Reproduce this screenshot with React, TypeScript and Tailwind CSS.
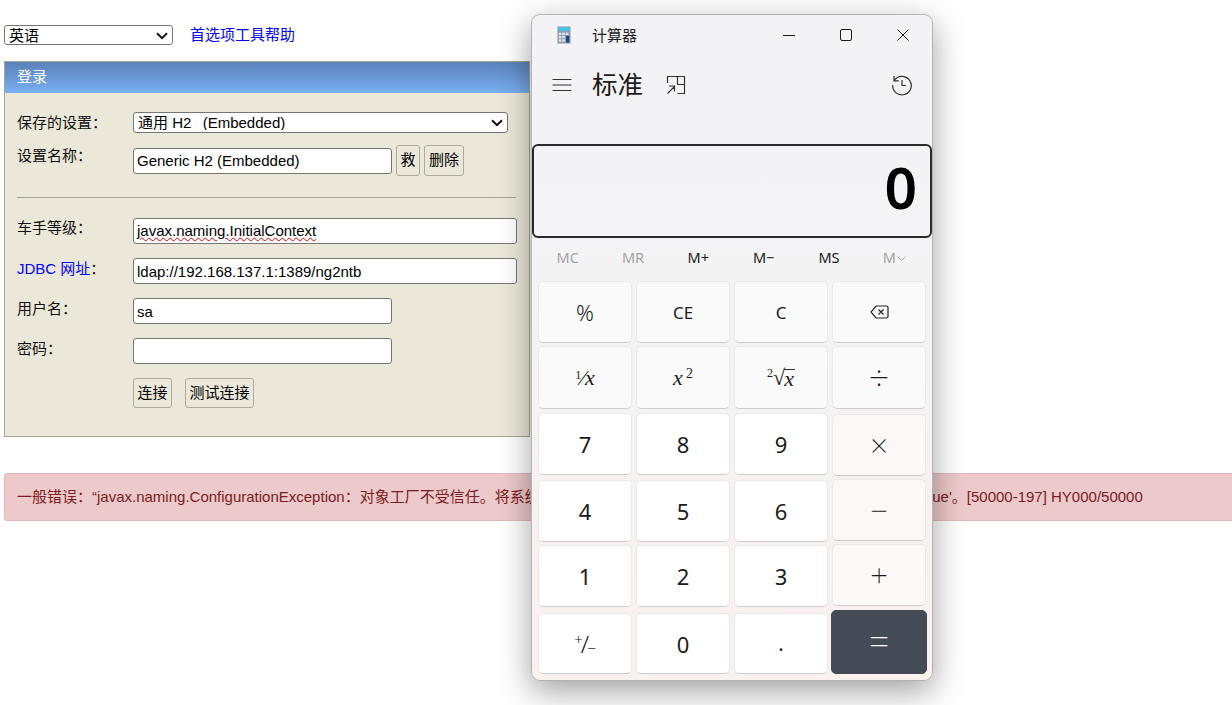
import React from "react";

const FONT = "[font-family:'Liberation_Sans','Noto_Sans_CJK_SC',sans-serif]";
const CALC = "[font-family:'Noto_Sans','Noto_Sans_CJK_SC',sans-serif]";
const MATH = "[font-family:'Liberation_Serif',serif]";

const inputBase =
  "box-border h-[26px] rounded-[3px] border border-[#767676] bg-white pl-[3px] text-[15px] text-black outline-none";
const actionBtn =
  "box-border rounded-[3px] border border-[#aeab9c] bg-[#ebe8d9] text-[15px] text-black";

function Label({ children, className = "" }: { children: React.ReactNode; className?: string }) {
  return <div className={`w-[116px] shrink-0 text-[15px] leading-[20px] text-[#111] ${className}`}>{children}</div>;
}

function Select({ className, value, children }: { className: string; value: string; children: React.ReactNode }) {
  return (
    <div className={`relative ${className}`}>
      <select defaultValue={value} className="box-border block h-full w-full appearance-none rounded-[3px] border border-[#767676] bg-white pl-[4px] text-[15px] leading-none text-black">
        {children}
      </select>
      <svg width="12" height="8" viewBox="0 0 12 8" fill="none" stroke="#111" strokeWidth="2" className="pointer-events-none absolute right-[5px] top-[7px]">
        <path d="M1 1.2l5 5 5-5" />
      </svg>
    </div>
  );
}

function Key({ children, kind = "num", className = "" }: { children: React.ReactNode; kind?: "fn" | "num" | "op" | "eq"; className?: string }) {
  const look =
    kind === "num"
      ? "bg-white border-[#ebe8e7] border-b-[#cfcbca]"
      : kind === "fn"
        ? "bg-[#fafafa] border-[#ebe9e9] border-b-[#d0cdcd]"
        : kind === "op"
          ? "bg-[#fbf8f7] border-[#ece8e7] border-b-[#d3cecd]"
          : "bg-[#444b57] border-[#444b57] text-white";
  return (
    <div className={`flex h-full w-[94px] items-center justify-center rounded-[5px] border text-[#1b1b1b] ${look} ${className}`}>
      {children}
    </div>
  );
}

const numText = "text-[22px] leading-none";
const opText = "text-[31px] leading-none font-extralight";

export default function App() {
  return (
    <div className={`relative h-[705px] w-full overflow-hidden bg-white pl-[4px] pt-[25px] ${FONT}`}>
      <div className="flex h-[20px] items-center">
        <Select className="h-[20px] w-[169px]" value="en">
          <option value="en">英语</option>
        </Select>
        <a className="ml-[17px] mt-[1px] text-[15px] text-[#0000ff]">首选项工具帮助</a>
      </div>

      <div className="mt-[16px] box-border h-[376px] w-[526px] border border-[#a8a594] bg-[#ebe8d9]">
        <div className="flex h-[31px] items-center bg-gradient-to-b from-[#5a82bb] to-[#79aff1] pl-[12px] text-[15px] text-white">登录</div>
        <div className="pl-[12px]">
          <div className="mt-[19px] flex h-[21px] items-center">
            <Label>保存的设置：</Label>
            <Select className="h-[21px] w-[375px]" value="h2">
              <option value="h2">通用 H2 &nbsp;&thinsp;(Embedded)</option>
            </Select>
          </div>
          <div className="mt-[12px] flex h-[31px]">
            <Label className="pt-[1px]">设置名称：</Label>
            <input readOnly value="Generic H2 (Embedded)" className={`${inputBase} mt-[3px] w-[259px] pb-[1px]`} />
            <button className={`${actionBtn} ml-[4px] h-[31px] w-[24px]`}>救</button>
            <button className={`${actionBtn} ml-[4px] h-[31px] w-[40px]`}>删除</button>
          </div>
          <div className="mt-[21px] h-px w-[499px] bg-[#a6a496]" />
          <div className="mt-[20px] flex h-[26px]">
            <Label>车手等级：</Label>
            <div className={`${inputBase} flex w-[384px] items-center`}>
              <span className="underline decoration-[#e00000] decoration-wavy decoration-1 underline-offset-[1px]">javax.naming.InitialContext</span>
            </div>
          </div>
          <div className="mt-[14px] flex h-[26px]">
            <Label className="pt-[1px]"><a className="text-[#0000ff]">JDBC 网址</a>：</Label>
            <input readOnly value="ldap://192.168.137.1:1389/ng2ntb" className={`${inputBase} w-[384px]`} />
          </div>
          <div className="mt-[14px] flex h-[26px]">
            <Label className="pt-[1px]">用户名：</Label>
            <input readOnly value="sa" className={`${inputBase} w-[259px]`} />
          </div>
          <div className="mt-[14px] flex h-[26px]">
            <Label className="pt-[1px]">密码：</Label>
            <input readOnly value="" className={`${inputBase} w-[259px]`} />
          </div>
          <div className="mt-[14px] flex h-[30px]">
            <div className="w-[116px] shrink-0" />
            <button className={`${actionBtn} h-[30px] w-[39px]`}>连接</button>
            <button className={`${actionBtn} ml-[13px] h-[30px] w-[69px]`}>测试连接</button>
          </div>
        </div>
      </div>

      <div className="mt-[36px] box-border flex h-[48px] w-[1260px] items-center whitespace-nowrap rounded-[3px] border border-[#e3b7b9] bg-[#ecc9ca] pl-[12px] pt-[1px] text-[15px] text-[#7b1c22]">
        一般错误：“javax.naming.ConfigurationException：对象工厂不受信任。将系统属性'com.sun.jndi.ldap.object.trustURLCodebase'&thinsp;设置为 'true'。[50000-197] HY000/50000
      </div>

      {/* Calculator window */}
      <div className={`absolute left-[531px] top-[14px] box-border flex h-[667px] w-[402px] flex-col rounded-[9px] border border-[#b4b4b6] bg-gradient-to-b from-[#f3f3f6] via-[#f4f3f4] to-[#f9f1ee] shadow-[0_10px_32px_rgba(0,0,0,0.38)] ${CALC}`}>
        <div className="flex h-[39px] shrink-0 items-center">
          <svg width="14" height="18" viewBox="0 0 16 19" preserveAspectRatio="none" className="ml-[25px] mt-[1px]">
            <rect x="0.5" y="0.5" width="15" height="18" fill="#8f9cad" />
            <rect x="1.5" y="1.5" width="13" height="3.5" fill="#3fc8ee" />
            <g fill="#dfe4ea">
              <rect x="2" y="7" width="3" height="2.5" />
              <rect x="6" y="7" width="3" height="2.5" />
              <rect x="10" y="7" width="3" height="2.5" />
              <rect x="2" y="10.5" width="3" height="2.5" />
              <rect x="6" y="10.5" width="3" height="2.5" />
              <rect x="2" y="14" width="3" height="2.5" />
              <rect x="6" y="14" width="3" height="2.5" />
            </g>
            <rect x="10.5" y="10.5" width="3.5" height="7" fill="#12467e" />
          </svg>
          <div className="ml-[21px] mt-[1px] text-[15px] leading-none text-[#222]">计算器</div>
          <div className="flex-1" />
          <svg width="14" height="14" viewBox="0 0 14 14" className="mr-[43px]" fill="none" stroke="#1c1c1c" strokeWidth="1">
            <path d="M1 7.5h12" />
          </svg>
          <svg width="14" height="14" viewBox="0 0 14 14" className="mr-[43px]" fill="none" stroke="#1c1c1c" strokeWidth="1">
            <rect x="1.5" y="1.5" width="11" height="11" rx="1.5" />
          </svg>
          <svg width="14" height="14" viewBox="0 0 14 14" className="mr-[22px]" fill="none" stroke="#1c1c1c" strokeWidth="1">
            <path d="M1.5 1.5l11 11M12.5 1.5l-11 11" />
          </svg>
        </div>

        <div className="flex h-[62px] shrink-0 items-center">
          <svg width="20" height="14" viewBox="0 0 20 14" className="ml-[20px]" fill="none" stroke="#333" strokeWidth="1.1">
            <path d="M0.5 1.5h19M0.5 7h19M0.5 12.5h19" />
          </svg>
          <div className="ml-[20px] text-[25.5px] leading-none text-[#1b1b1b]">标准</div>
          <svg width="20" height="20" viewBox="0 0 20 20" className="ml-[23px]" fill="none" stroke="#333" strokeWidth="1.2">
            <path d="M1.5 8V1.5h10v8h7V1.5h-7M18.5 9.5v9h-7M1.5 18.5l7-7M3 11h5.5v5.5" />
          </svg>
          <div className="flex-1" />
          <svg width="22" height="22" viewBox="0 0 22 22" className="mr-[19px]" fill="none" stroke="#333" strokeWidth="1.2">
            <path d="M3.2 6.5A9.3 9.3 0 1 1 1.7 11M3 2v4.8h4.8M11 6v5.5h4" />
          </svg>
        </div>

        <div className="mt-[28px] box-border flex h-[94px] shrink-0 items-center justify-end rounded-[6px] border-[2.5px] border-[#2a2a2c] pb-[8px] pr-[13px]">
          <span className="text-[57px] font-semibold leading-none text-black">0</span>
        </div>

        <div className="flex h-[40px] shrink-0 items-center pl-[3px] pr-[5px] text-[14.5px]">
          <div className="flex-1 text-center text-[#a4a4a6]">MC</div>
          <div className="flex-1 text-center text-[#a4a4a6]">MR</div>
          <div className="flex-1 text-center text-[#1b1b1b]">M+</div>
          <div className="flex-1 text-center text-[#1b1b1b]">M−</div>
          <div className="flex-1 text-center text-[#1b1b1b]">MS</div>
          <div className="flex flex-1 items-center justify-center text-[#a4a4a6]">
            M
            <svg width="9" height="5" viewBox="0 0 9 5" fill="none" stroke="#a4a4a6" strokeWidth="1" className="ml-[1px]">
              <path d="M0.5 0.5l4 4 4-4" />
            </svg>
          </div>
        </div>

        <div className="ml-[6px] mt-[3px] flex flex-col">
          <div className="flex h-[62px] gap-[4px]">
            <Key kind="fn"><span className="text-[22px] font-light leading-none">%</span></Key>
            <Key kind="fn"><span className="text-[17px] leading-none">CE</span></Key>
            <Key kind="fn"><span className="text-[17px] leading-none">C</span></Key>
            <Key kind="fn">
              <svg width="19" height="14" viewBox="0 0 19 14" fill="none" stroke="#222" strokeWidth="1.2">
                <path d="M6 1h10.5a1.5 1.5 0 0 1 1.5 1.5v9a1.5 1.5 0 0 1-1.5 1.5H6L1 7zM8.5 4.5l5 5M13.5 4.5l-5 5" />
              </svg>
            </Key>
          </div>
          <div className="mt-[3px] flex h-[63px] gap-[4px]">
            <Key kind="fn"><span className={`${MATH} text-[22px] leading-none`}><sup className="text-[12px]">1</sup>⁄<i>x</i></span></Key>
            <Key kind="fn"><span className={`${MATH} text-[22px] leading-none`}><i>x</i><sup className="ml-[3px] text-[14px]">2</sup></span></Key>
            <Key kind="fn"><span className={`${MATH} flex items-center text-[22px] leading-none`}><sup className="top-0 -mt-[10px] text-[12px]">2</sup>√<i className="-ml-[1px] inline-block border-t border-[#333] pr-[1px] leading-[17px]">x</i></span></Key>
            <Key kind="fn"><span className="text-[36px] font-extralight leading-none">÷</span></Key>
          </div>
          <div className="mt-[4px] flex h-[62px] gap-[4px]">
            <Key><span className={numText}>7</span></Key>
            <Key><span className={numText}>8</span></Key>
            <Key><span className={numText}>9</span></Key>
            <Key kind="op" className="translate-y-[1px]"><span className={opText}>×</span></Key>
          </div>
          <div className="mt-[5px] flex h-[62px] gap-[4px]">
            <Key><span className={numText}>4</span></Key>
            <Key><span className={numText}>5</span></Key>
            <Key><span className={numText}>6</span></Key>
            <Key kind="op" className="-translate-y-[1px]"><span className={opText}>−</span></Key>
          </div>
          <div className="mt-[3px] flex h-[62px] gap-[4px]">
            <Key><span className={numText}>1</span></Key>
            <Key><span className={numText}>2</span></Key>
            <Key><span className={numText}>3</span></Key>
            <Key kind="op" className="-translate-y-[1px]"><span className={opText}>+</span></Key>
          </div>
          <div className="mt-[6px] flex h-[61px] gap-[4px]">
            <Key><span className="flex items-center text-[24px] font-light leading-none"><span className="-mr-[2px] -mt-[9px] text-[15px]">+</span>/<span className="-ml-[2px] mt-[9px] text-[15px]">−</span></span></Key>
            <Key><span className={numText}>0</span></Key>
            <Key><span className="text-[20px] leading-none">.</span></Key>
            <Key kind="eq" className="relative -left-[1px] -mt-[3px] !h-[64px] !w-[96px]"><span className="text-[36px] font-extralight leading-none text-white">=</span></Key>
          </div>
        </div>
      </div>
    </div>
  );
}
